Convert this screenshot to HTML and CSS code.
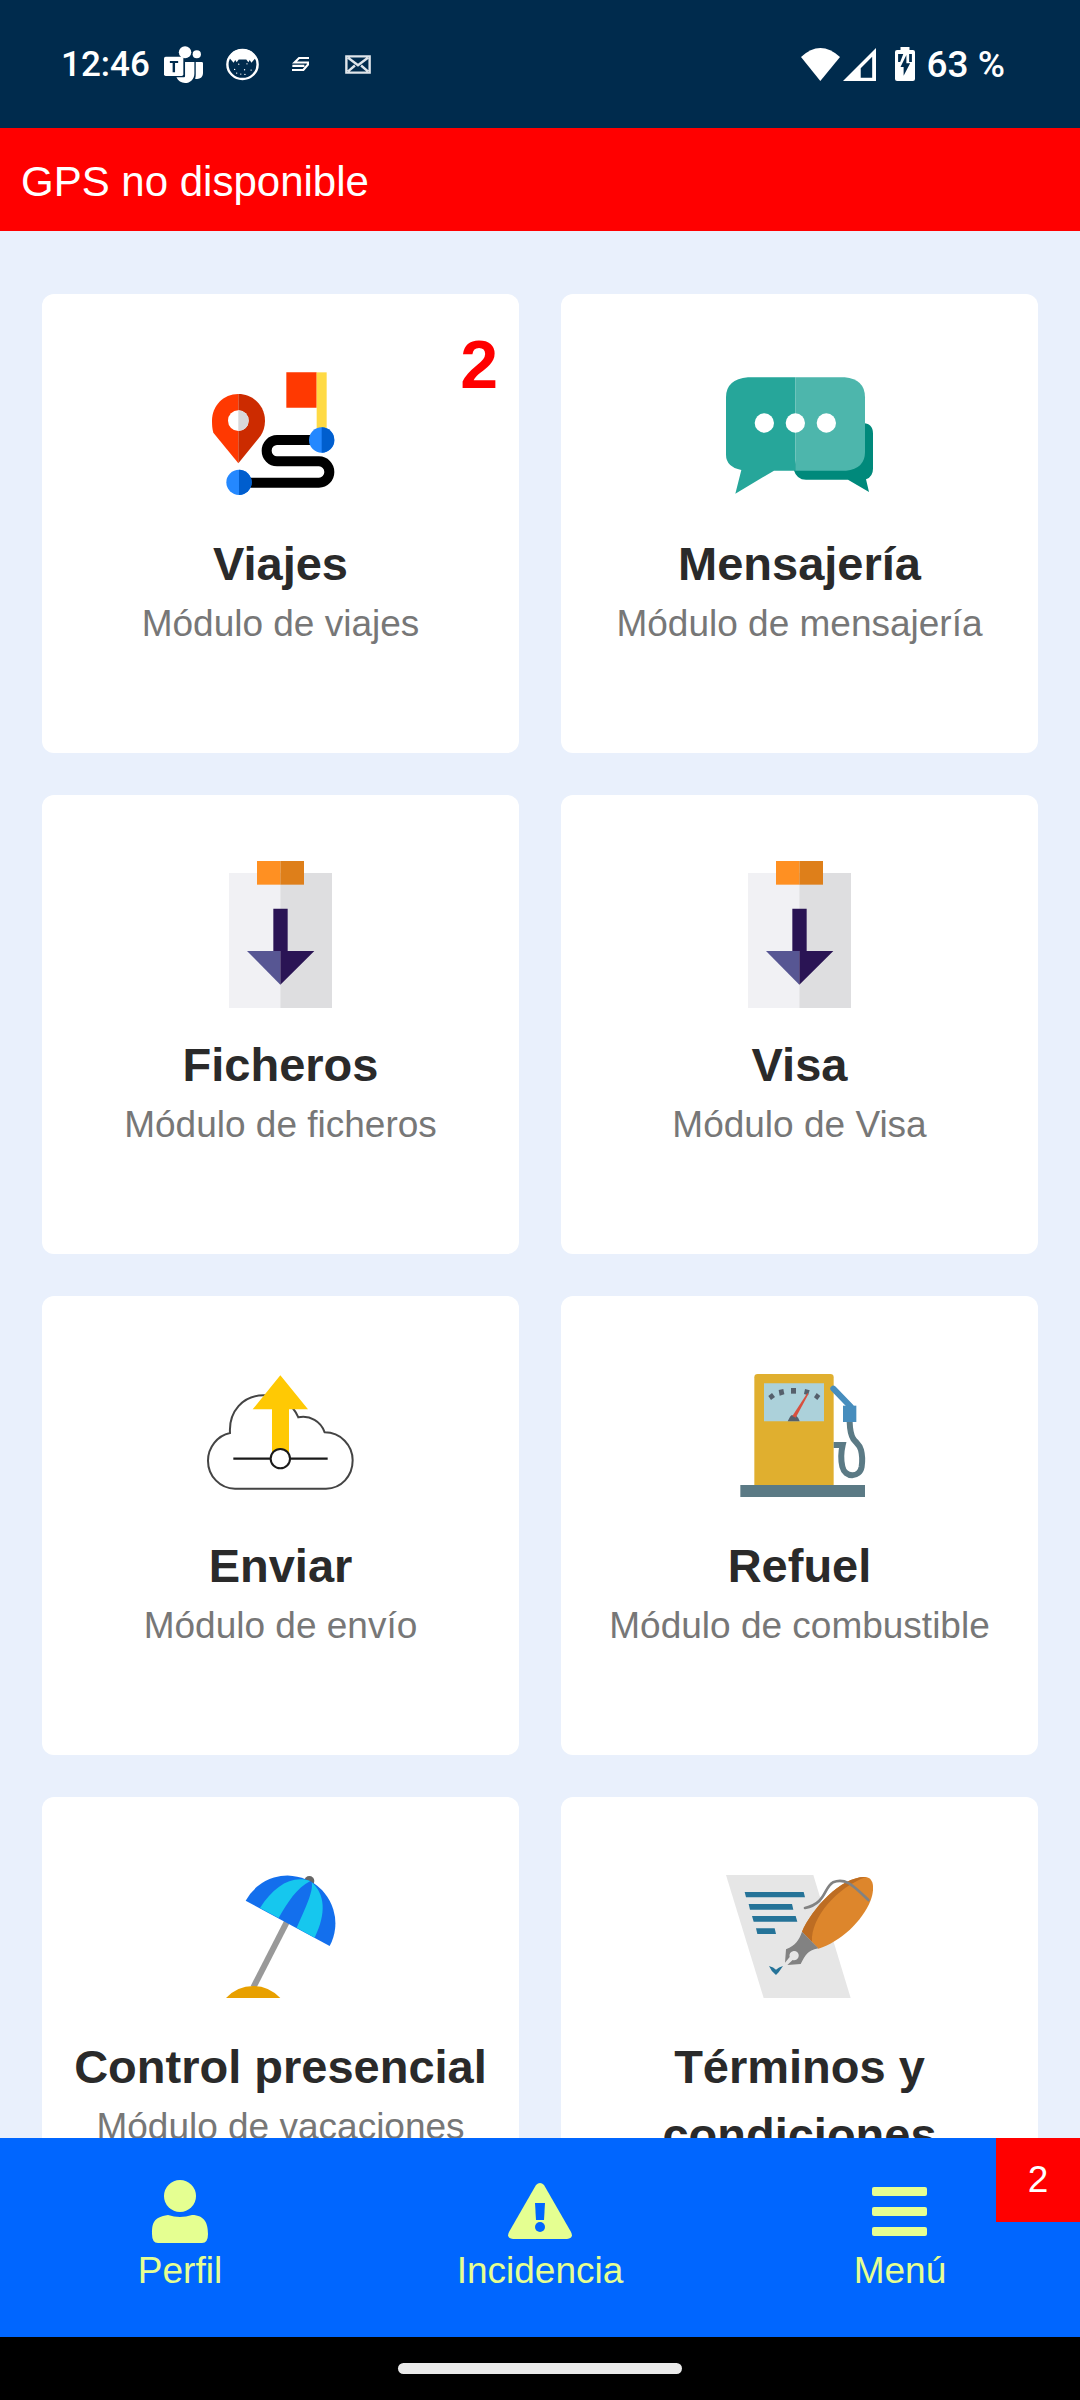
FILE: index.html
```html
<!DOCTYPE html>
<html lang="es">
<head>
    <meta charset="UTF-8">
    <meta name="viewport" content="width=device-width, initial-scale=1.0">
    <title>Inicio</title>
    <link rel="stylesheet" href="styles.css">
</head>
<body>
    <header class="status-bar">
        <div class="status-left">
            <span class="clock">12:46</span>
            <svg class="teams" viewBox="476 138 113 111" preserveAspectRatio="none" fill="#fff">
                <circle cx="537" cy="157" r="18"/>
                <circle cx="571" cy="163" r="12"/>
                <path d="M537 186h27v35c0 16-12 28-27 28-11 0-20-6-25-17h22q3 0 3-4z"/>
                <path d="M568 186h17q4 0 4 4v29c0 14-11 20-23 17 2-5 2-10 2-15z"/>
                <rect x="476" y="170" width="56" height="58" rx="5"/>
                <path d="M493 183h24v6h-9v28h-7v-28h-8z" fill="#002b4d"/>
            </svg>
            <svg class="cat" viewBox="655 145 96 100" preserveAspectRatio="none">
                <circle cx="703" cy="195" r="44" fill="#002b4d" stroke="#fff" stroke-width="7"/>
                <path d="M664 174c8-18 22-26 39-26s31 8 39 26c-5 6-9 10-13 16l-5-9-4 7-6-8h-22l-6 8-4-7-5 9c-4-6-8-10-13-16z" fill="#fff"/>
                <g fill="#fff">
                    <circle cx="692" cy="194" r="2"/><circle cx="716" cy="193" r="2"/>
                    <circle cx="680" cy="210" r="2"/><circle cx="709" cy="211" r="2"/>
                    <circle cx="728" cy="212" r="2"/><circle cx="698" cy="224" r="2"/>
                    <circle cx="686" cy="221" r="2"/><circle cx="710" cy="225" r="2"/>
                </g>
            </svg>
            <svg class="sign" viewBox="847 176 48 41" preserveAspectRatio="none" fill="none" stroke="#fff" stroke-width="6">
                <path d="M895 179h-28l-13 13h38v6l-13 16h-32M848 202h34"/>
            </svg>
            <svg class="mail" viewBox="1001 167 76 56" preserveAspectRatio="none" fill="none" stroke="#dfe5ea" stroke-width="7">
                <path d="M1005 171h68v48h-68zM1010 175l29 22 29-22M1010 215l20-17M1068 215l-20-17"/>
            </svg>
        </div>
        <div class="status-right">
            <svg class="wifi" viewBox="752 141 113 99" preserveAspectRatio="none"><path d="M752 168q56-54 113 0l-57 72z" fill="#fff"/></svg>
            <svg class="signal" viewBox="875 142 95 98" preserveAspectRatio="none"><path d="M970 142v98h-95zM959 168l-33 34v28h33z" fill="#fff" fill-rule="evenodd"/></svg>
            <svg class="battery" viewBox="1025 138 58 102" preserveAspectRatio="none">
                <path d="M1041 138h26v9h10q6 0 6 6v81q0 6-6 6h-46q-6 0-6-6v-81q0-6 6-6h10z" fill="#fff"/>
                <path d="M1034 159h15l-9 24h-6zM1058 162v25h11l-19 37v-26h-9zM1066 159h8v24h-8z" fill="#002b4d"/>
            </svg>
            <span class="percent">63 %</span>
        </div>
    </header>

    <div class="alert" role="alert">GPS no disponible</div>

    <main class="content">
        <div class="grid">
            <a class="card" href="#viajes">
                <span class="count">2</span>
                <svg class="icon" viewBox="561 240 441 441">
                    <path d="M799 277h91v106h-91z" fill="#ff3901"/>
                    <path d="M890 277h30v170h-30z" fill="#ffda44"/>
                    <path d="M880 480H771a31 32 0 0 0 0 64h126a31 32 0 0 1 0 64H680" fill="none" stroke="#000" stroke-width="30"/>
                    <path d="M655 342c-45 0-79 36-79 80 0 14 1 25 4 36l8 10 67 82z" fill="#ff3901"/>
                    <path d="M655 342c45 0 80 36 80 80 0 18-5 32-13 45l-67 83z" fill="#cc2b00"/>
                    <circle cx="655" cy="422" r="31" fill="#fff"/>
                    <path d="M655 391a31 31 0 0 1 0 62z" fill="#d8d8da"/>
                    <circle cx="657" cy="607" r="38" fill="#2488ff"/>
                    <path d="M657 569a38 38 0 0 1 0 76z" fill="#005ece"/>
                    <circle cx="905" cy="480" r="38" fill="#2488ff"/>
                    <path d="M905 442a38 38 0 0 1 0 76z" fill="#005ece"/>
                </svg>
                <h2 class="title">Viajes</h2>
                <p class="subtitle">Módulo de viajes</p>
            </a>
            <a class="card" href="#mensajeria">
                <svg class="icon" viewBox="528 240 441 441">
                    <path d="M765 429h172q32 0 32 32v105q0 24-21 32l9 38-63-37H768q-28 0-37-30z" fill="#00897b"/>
                    <path d="M736 292H594q-66 6-66 60v172q0 36 46 46l-18 71 116-69h64z" fill="#26a69a"/>
                    <path d="M736 292h148q61 6 61 60v164q0 50-57 56H736z" fill="#4db6ac"/>
                    <circle cx="643" cy="429" r="29" fill="#fff"/>
                    <circle cx="736" cy="429" r="29" fill="#fff"/>
                    <circle cx="829" cy="429" r="29" fill="#fff"/>
                </svg>
                <h2 class="title">Mensajería</h2>
                <p class="subtitle">Módulo de mensajería</p>
            </a>
            <a class="card" href="#ficheros">
                <svg class="icon" viewBox="561 243 441 441">
                    <path d="M627 279h154v405H627z" fill="#f1f1f4"/>
                    <path d="M781 279h155v405H781z" fill="#dedee0"/>
                    <path d="M711 243h70v71h-70z" fill="#ff9022"/>
                    <path d="M781 243h71v71h-71z" fill="#de7f1a"/>
                    <path d="M681 513h100v101z" fill="#575693"/>
                    <path d="M760 386h43v127h80L781 614V513h-21z" fill="#2a1454"/>
                </svg>
                <h2 class="title">Ficheros</h2>
                <p class="subtitle">Módulo de ficheros</p>
            </a>
            <a class="card" href="#visa">
                <svg class="icon" viewBox="561 243 441 441">
                    <path d="M627 279h154v405H627z" fill="#f1f1f4"/>
                    <path d="M781 279h155v405H781z" fill="#dedee0"/>
                    <path d="M711 243h70v71h-70z" fill="#ff9022"/>
                    <path d="M781 243h71v71h-71z" fill="#de7f1a"/>
                    <path d="M681 513h100v101z" fill="#575693"/>
                    <path d="M760 386h43v127h80L781 614V513h-21z" fill="#2a1454"/>
                </svg>
                <h2 class="title">Visa</h2>
                <p class="subtitle">Módulo de Visa</p>
            </a>
            <a class="card" href="#enviar">
                <svg class="icon" viewBox="561 246 441 441">
                    <path d="M645 626C600 626 564 588 564 542C564 502 592 467 630 459C626 395 668 346 732 346C780 346 818 372 835 412C870 405 903 424 914 457C962 457 998 496 998 541C998 588 964 626 918 626Z" fill="none" stroke="#444" stroke-width="6"/>
                    <path d="M781 286l83 102h-57v148h-51V388h-58z" fill="#ffc904"/>
                    <path d="M640 536h283" stroke="#1a1a1a" stroke-width="7"/>
                    <circle cx="781" cy="536" r="29" fill="#fff" stroke="#1a1a1a" stroke-width="6"/>
                </svg>
                <h2 class="title">Enviar</h2>
                <p class="subtitle">Módulo de envío</p>
            </a>
            <a class="card" href="#refuel">
                <svg class="icon" viewBox="528 246 441 441">
                    <path d="M613 616V292q0-10 10-10h218q10 0 10 10v324z" fill="#e0af2f"/>
                    <path d="M642 310h180v114H642z" fill="#acd1da"/>
                    <g fill="#555f6b">
                        <path d="M723 324h15v17h-15z"/>
                        <path d="M686 330l14-3 3 16-14 4z"/>
                        <path d="M765 327l14 4-5 15-12-4z"/>
                        <path d="M655 348l11-9 9 12-12 9z"/>
                        <path d="M800 339l11 9-9 12-10-8z"/>
                        <path d="M713 424q6-14 11-18h13q8 6 12 18z"/>
                    </g>
                    <path d="M727 408l45-69 3 4-38 70z" fill="#d8503f"/>
                    <path d="M571 615h374v36H571z" fill="#5b7a85"/>
                    <path d="M851 495h27q-8 34-1 65c8 34 52 34 58 0q4-27-2-50c-4-16-15-22-23-33q-10-16-11-51" fill="none" stroke="#5b7a85" stroke-width="18"/>
                    <path d="M850 326l52 54" stroke="#478dbd" stroke-width="18" stroke-linecap="round"/>
                    <path d="M879 377h40v49h-40z" fill="#478dbd"/>
                </svg>
                <h2 class="title">Refuel</h2>
                <p class="subtitle">Módulo de combustible</p>
            </a>
            <a class="card" href="#control">
                <svg class="icon" viewBox="561 249 441 441">
                    <path d="M801 425L700 622" stroke="#999" stroke-width="18"/>
                    <circle cx="868" cy="303" r="15" fill="#666"/>
                    <path d="M677 362A143 143 0 0 1 929 498Z" fill="#136fed"/>
                    <path d="M720 384C762 318 816 284 871 303C830 324 802 368 776 414Z" fill="#16c7ee"/>
                    <path d="M830 443C864 370 880 330 875 307C915 342 920 400 884 473Z" fill="#16c7ee"/>
                    <path d="M618 654q34-36 82-36 46 0 81 36z" fill="#e8a000"/>
                </svg>
                <h2 class="title">Control presencial</h2>
                <p class="subtitle">Módulo de vacaciones</p>
            </a>
            <a class="card" href="#terminos">
                <svg class="icon" viewBox="528 249 441 441">
                    <path d="M528 285h262l112 369H641z" fill="#e6e6e6"/>
                    <path d="M584 336h177l4 16H588zM596 372h130l4 17H600zM606 408h131l5 17H611zM618 445h56l4 17h-56zM657 558q14 4 21 11 8-7 21-11l-13 19-8 8q-14-10-21-27z" fill="#257398"/>
                    <path d="M756 455c30-70 120-168 192-164 26 4 25 40 14 70-24 62-90 125-157 145z" fill="#dd862c"/>
                    <path d="M756 455c30-70 120-168 192-164-84 30-166 120-162 194z" fill="#bd6d23"/>
                    <path d="M756 455l49 50c-35 8-38 20-53 47l-40 3 16-15a14 14 0 1 0-9-9l-14 17 3-40c30-14 38-26 48-53z" fill="#828282"/>
                    <path d="M765 384c64-14 56-62 84-77 40-16 64 14 106 53" fill="none" stroke="#828282" stroke-width="8" stroke-linecap="round"/>
                </svg>
                <h2 class="title">Términos y condiciones</h2>
            </a>
        </div>
    </main>

    <nav class="nav">
        <a class="nav-item" href="#perfil">
            <svg class="nav-icon" viewBox="0 0 64 63" fill="#e5ff91">
                <circle cx="32" cy="16" r="16"/>
                <path d="M4 54c0-10 1-17 16-19q6 2 12 2t12-2c13 0 16 9 16 19q0 9-6 9H10q-6 0-6-9z"/>
            </svg>
            <span>Perfil</span>
        </a>
        <a class="nav-item" href="#incidencia">
            <svg class="nav-icon" viewBox="0 0 64 63" fill="#e5ff91">
                <path d="M28 5q4-4 8 0l27 47q3 6-4 7H5q-7-1-4-7z"/>
                <path d="M27 23h10l-1 17h-8z" fill="#0066ff"/>
                <circle cx="32" cy="47" r="5" fill="#0066ff"/>
            </svg>
            <span>Incidencia</span>
        </a>
        <a class="nav-item" href="#menu">
            <svg class="nav-icon" viewBox="0 0 64 63" fill="#e5ff91">
                <rect x="4" y="7" width="55" height="9" rx="2"/>
                <rect x="4" y="27" width="55" height="9" rx="2"/>
                <rect x="4" y="47" width="55" height="9" rx="2"/>
            </svg>
            <span>Menú</span>
            <span class="nav-badge">2</span>
        </a>
    </nav>

    <footer class="gesture-bar">
        <div class="pill"></div>
    </footer>
</body>
</html>
```
FILE: styles.css
```css
*{
    box-sizing: border-box;
}
body{
    margin: 0;
    height: 100vh;
    display: flex;
    flex-direction: column;
    background-color: #e9f0fc;
    font-family: "Liberation Sans", Arial, sans-serif;
}
a{
    color: inherit;
    text-decoration: none;
}
svg{
    display: block;
}

/* status bar */
.status-bar{
    flex: none;
    height: 128px;
    padding: 0 75px 0 61px;
    display: flex;
    align-items: center;
    justify-content: space-between;
    background-color: #002b4d;
    color: #fff;
    font-family: Roboto, sans-serif;
    font-weight: 500;
}
.status-left,
.status-right{
    display: flex;
    align-items: center;
}
.clock{
    margin-right: 14px;
    font-size: 35px;
}
.percent{
    font-size: 37px;
}
.teams{
    width: 39px;
    height: 37px;
    margin-right: 23px;
}
.cat{
    width: 33px;
    height: 33px;
    margin-right: 33px;
}
.sign{
    width: 17px;
    height: 14px;
    margin-right: 36px;
}
.mail{
    width: 26px;
    height: 19px;
}
.wifi{
    width: 39px;
    height: 33px;
    margin-right: 3px;
}
.signal{
    width: 33px;
    height: 33px;
    margin-right: 19px;
}
.battery{
    width: 20px;
    height: 34px;
    margin-right: 12px;
}

.alert{
    flex: none;
    padding: 22px 21px 17px;
    background-color: #ff0000;
    color: #fff;
    font-size: 42px;
    line-height: 64px;
}

/* modules */
.content{
    flex: 1;
    min-height: 0;
    overflow-y: auto;
    scrollbar-width: none;
    padding: 63px 42px;
}
.grid{
    display: grid;
    grid-template-columns: 1fr 1fr;
    gap: 42px;
}
.card{
    position: relative;
    min-height: 459px;
    padding: 66px 24px 24px;
    display: flex;
    flex-direction: column;
    align-items: center;
    background-color: #fff;
    border-radius: 12px;
    text-align: center;
}
.count{
    position: absolute;
    top: 36px;
    right: 21px;
    color: #ff0000;
    font-size: 68px;
    font-weight: 700;
    line-height: 68px;
}
.icon{
    width: 147px;
    height: 147px;
    margin-bottom: 23px;
}
.title{
    margin: 0;
    color: #2a2a2a;
    font-size: 47px;
    font-weight: 700;
    line-height: 68px;
}
.subtitle{
    margin: 0;
    color: #777;
    font-size: 37px;
    line-height: 52px;
}

/* bottom nav */
.nav{
    flex: none;
    height: 199px;
    display: flex;
    background-color: #0066ff;
    color: #e5ff91;
    font-size: 37px;
    line-height: 44px;
}
.nav-item{
    position: relative;
    flex: 1;
    padding-top: 42px;
    display: flex;
    flex-direction: column;
    align-items: center;
    gap: 6px;
}
.nav-icon{
    width: 64px;
    height: 63px;
}
.nav-badge{
    position: absolute;
    top: 0;
    right: 0;
    width: 84px;
    background-color: #ff0000;
    color: #fff;
    line-height: 84px;
    text-align: center;
}
.gesture-bar{
    flex: none;
    height: 63px;
    padding-top: 26px;
    background-color: #000;
}
.pill{
    width: 284px;
    height: 11px;
    margin: 0 auto;
    border-radius: 6px;
    background-color: #eaeaea;
}
```
